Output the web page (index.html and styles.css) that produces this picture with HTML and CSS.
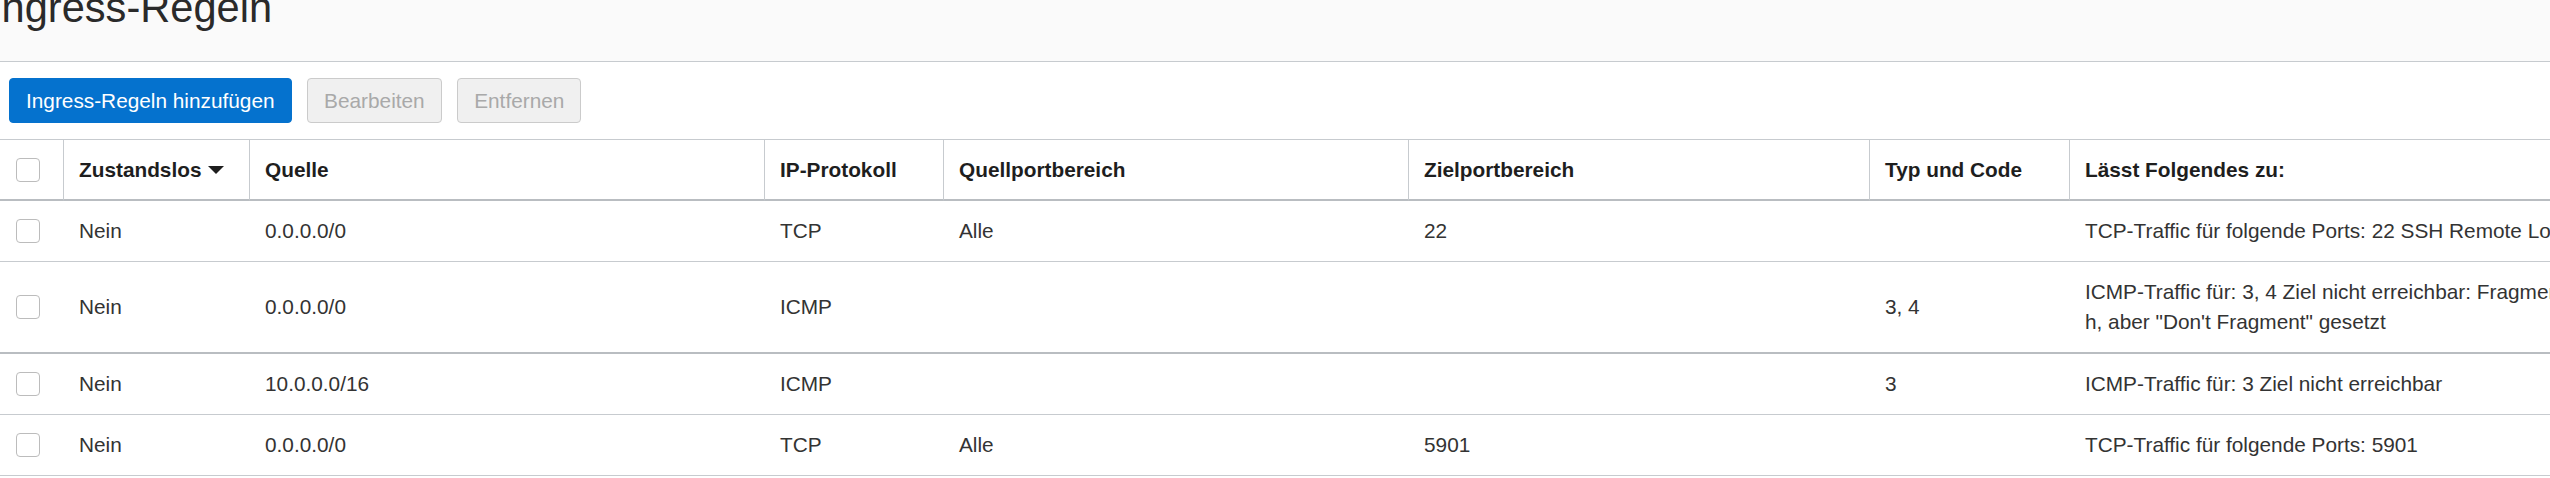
FILE: index.html
```html
<!DOCTYPE html>
<html lang="de">
<head>
<meta charset="utf-8">
<title>Ingress-Regeln</title>
<link rel="stylesheet" href="styles.css">
</head>
<body>
<div class="page">
  <header class="page-header">
    <h1 class="title">Ingress-Regeln</h1>
  </header>
  <div class="toolbar">
    <button class="btn btn-primary" type="button">Ingress-Regeln hinzufügen</button>
    <button class="btn btn-disabled" type="button" disabled>Bearbeiten</button>
    <button class="btn btn-disabled" type="button" disabled>Entfernen</button>
  </div>
  <div class="table-wrap">
    <table class="rules">
      <colgroup>
        <col class="c-check">
        <col class="c-state">
        <col class="c-source">
        <col class="c-proto">
        <col class="c-srcport">
        <col class="c-dstport">
        <col class="c-type">
        <col class="c-desc">
      </colgroup>
      <thead>
        <tr>
          <th class="cell-check"><div class="check-wrap"><span class="checkbox"></span></div></th>
          <th>Zustandslos<span class="caret"></span></th>
          <th>Quelle</th>
          <th>IP-Protokoll</th>
          <th>Quellportbereich</th>
          <th>Zielportbereich</th>
          <th>Typ und Code</th>
          <th>Lässt Folgendes zu:</th>
        </tr>
      </thead>
      <tbody>
        <tr>
          <td class="cell-check"><div class="check-wrap"><span class="checkbox"></span></div></td>
          <td>Nein</td>
          <td>0.0.0.0/0</td>
          <td>TCP</td>
          <td>Alle</td>
          <td>22</td>
          <td></td>
          <td class="desc">TCP-Traffic für folgende Ports: 22 SSH Remote Login Protocol</td>
        </tr>
        <tr class="row-strong">
          <td class="cell-check"><div class="check-wrap"><span class="checkbox"></span></div></td>
          <td>Nein</td>
          <td>0.0.0.0/0</td>
          <td>ICMP</td>
          <td></td>
          <td></td>
          <td>3, 4</td>
          <td class="desc">ICMP-Traffic für: 3, 4 Ziel nicht erreichbar: Fragmentierung erforderlich, aber "Don't Fragment" gesetzt</td>
        </tr>
        <tr>
          <td class="cell-check"><div class="check-wrap"><span class="checkbox"></span></div></td>
          <td>Nein</td>
          <td>10.0.0.0/16</td>
          <td>ICMP</td>
          <td></td>
          <td></td>
          <td>3</td>
          <td class="desc">ICMP-Traffic für: 3 Ziel nicht erreichbar</td>
        </tr>
        <tr>
          <td class="cell-check"><div class="check-wrap"><span class="checkbox"></span></div></td>
          <td>Nein</td>
          <td>0.0.0.0/0</td>
          <td>TCP</td>
          <td>Alle</td>
          <td>5901</td>
          <td></td>
          <td class="desc">TCP-Traffic für folgende Ports: 5901</td>
        </tr>
      </tbody>
    </table>
  </div>
</div>
</body>
</html>
```
FILE: styles.css
```css
* {
  box-sizing: border-box;
}

html, body {
  margin: 0;
  padding: 0;
  background: #ffffff;
}

body {
  font-family: "Liberation Sans", Arial, sans-serif;
  color: #333333;
  overflow: hidden;
}

.page {
  width: 2550px;
  overflow: hidden;
}

.page-header {
  height: 62px;
  background: #fafafa;
  border-bottom: 1px solid #c7cbcf;
  overflow: hidden;
}

.title {
  margin: -16px 0 0 -10px;
  font-size: 41.6px;
  line-height: 48px;
  font-weight: normal;
  color: #2a2a2a;
  white-space: nowrap;
}

.toolbar {
  display: flex;
  gap: 15.5px;
  padding: 16px 0 16px 9px;
}

.btn {
  height: 45px;
  padding: 0 16px;
  font-family: "Liberation Sans", Arial, sans-serif;
  font-size: 20.8px;
  line-height: 43px;
  border-radius: 4px;
  border: 1px solid transparent;
  white-space: nowrap;
}

.btn-primary {
  background: #0572ce;
  border-color: #0572ce;
  color: #ffffff;
}

.btn-disabled {
  background: #f0f0f0;
  border-color: #cbcbcb;
  color: #a9a9a9;
}

.table-wrap {
  width: 2550px;
  overflow: hidden;
}

.rules {
  table-layout: fixed;
  width: 2744px;
  border-collapse: separate;
  border-spacing: 0;
  border-top: 1px solid #c7cbcf;
  font-size: 20.8px;
}

.c-check { width: 63px; }
.c-state { width: 186px; }
.c-source { width: 515px; }
.c-proto { width: 179px; }
.c-srcport { width: 465px; }
.c-dstport { width: 461px; }
.c-type { width: 200px; }
.c-desc { width: 675px; }

.rules th {
  text-align: left;
  font-weight: bold;
  color: #1e1e1e;
  line-height: 30px;
  padding: 15px 16px 14px 15px;
  border-left: 1px solid #c7cbcf;
  border-bottom: 2px solid #b9bdc1;
  vertical-align: middle;
  white-space: nowrap;
}

.rules th.cell-check {
  border-left: none;
  padding-left: 16px;
}

.rules td {
  line-height: 30px;
  padding: 15px 16px;
  border-bottom: 1px solid #c7cbcf;
  vertical-align: middle;
  color: #333333;
}

.rules tr.row-strong td {
  border-bottom: 2px solid #b9bdc1;
}

.rules td.desc {
  word-break: break-all;
}

.check-wrap {
  display: flex;
  align-items: center;
  height: 30px;
}

.checkbox {
  display: block;
  width: 24px;
  height: 24px;
  border: 1px solid #bcbcbc;
  border-radius: 4px;
  background: #ffffff;
}

.caret {
  display: inline-block;
  width: 0;
  height: 0;
  margin-left: 6px;
  border-left: 8px solid transparent;
  border-right: 8px solid transparent;
  border-top: 8px solid #1e1e1e;
  vertical-align: middle;
  position: relative;
  top: -2px;
}
```
